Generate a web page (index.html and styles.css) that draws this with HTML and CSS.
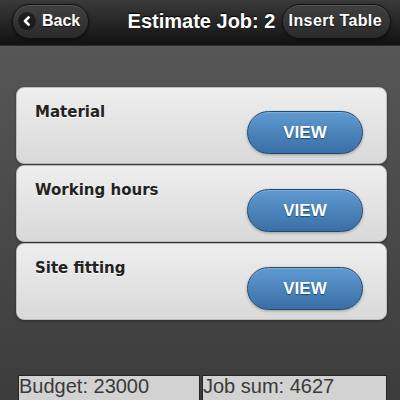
FILE: index.html
```html
<!DOCTYPE html>
<html>
<head>
<meta charset="utf-8">
<link rel="stylesheet" href="styles.css">
</head>
<body>
<div class="page">
  <header class="bar">
    <a class="hbtn back">
      <svg class="icon" width="18" height="18" viewBox="0 0 18 18"><circle cx="9" cy="9" r="9" fill="rgba(0,0,0,0.45)"/><polyline points="10.6,5.4 7,9 10.6,12.6" fill="none" stroke="#fff" stroke-width="2.7" stroke-linecap="round" stroke-linejoin="round"/></svg>
      <span>Back</span>
    </a>
    <h1 class="title">Estimate Job: 2</h1>
    <a class="hbtn insert"><span>Insert Table</span></a>
  </header>
  <main class="content">
    <div class="card"><span class="label">Material</span><a class="view">VIEW</a></div>
    <div class="card"><span class="label">Working hours</span><a class="view">VIEW</a></div>
    <div class="card"><span class="label">Site fitting</span><a class="view">VIEW</a></div>
  </main>
  <footer class="totals">
    <div class="box budget">Budget: 23000</div>
    <div class="box sum">Job sum: 4627</div>
  </footer>
</div>
</body>
</html>
```
FILE: styles.css
```css
html, body {
  margin: 0;
  padding: 0;
}
body {
  width: 400px;
  height: 400px;
  overflow: hidden;
  font-family: "Liberation Sans", Arial, sans-serif;
}
.page {
  height: 400px;
  background: linear-gradient(#5a5a5a, #3c3c3c);
  display: flex;
  flex-direction: column;
}
.bar {
  height: 46px;
  flex: none;
  box-sizing: border-box;
  display: grid;
  grid-template-columns: 1fr auto 1fr;
  align-items: center;
  padding: 0 9px 0 12px;
  background: linear-gradient(#3a3a3a, #111);
  border-bottom: 1px solid #2a2a2a;
}
.hbtn {
  height: 35px;
  box-sizing: border-box;
  display: flex;
  align-items: center;
  border: 1px solid #111;
  border-radius: 18px;
  background: linear-gradient(#404040, #2a2a2a);
  box-shadow: 0 1px 3px rgba(0,0,0,0.5), inset 0 1px 0 rgba(255,255,255,0.12);
  color: #fff;
  font-weight: bold;
  font-size: 16px;
  text-shadow: 0 1px 1px #111;
  margin-top: -3px;
}
.back {
  justify-self: start;
  padding: 0 8px 0 5px;
  gap: 6px;
}
.icon {
  display: block;
}
.insert {
  justify-self: end;
  padding: 0 8px 0 6px;
  letter-spacing: 0.4px;
}
.title {
  margin: 0;
  font-size: 20px;
  font-weight: bold;
  color: #fff;
  text-shadow: 0 -1px 1px #000;
  margin-top: -3px;
}
.content {
  flex: none;
  padding: 41px 13px 0 16px;
  display: flex;
  flex-direction: column;
  gap: 1px;
}
.card {
  height: 77px;
  box-sizing: border-box;
  display: flex;
  justify-content: space-between;
  align-items: flex-start;
  padding: 15px 23px 0 18px;
  border: 1px solid #bdbdbd;
  border-radius: 8px;
  background: linear-gradient(#eeeeee, #d9d9d9);
  box-shadow: 0 1px 3px rgba(0,0,0,0.35);
}
.label {
  font-family: "DejaVu Sans", Verdana, sans-serif;
  font-weight: bold;
  font-size: 15px;
  line-height: 18px;
  color: #222;
  text-shadow: 0 1px 0 #fff;
}
.view {
  margin-top: 8px;
  width: 116px;
  height: 43px;
  box-sizing: border-box;
  display: flex;
  align-items: center;
  justify-content: center;
  border: 1px solid #1f4a73;
  border-radius: 22px;
  background: linear-gradient(#5f9ad0, #3a6fa6);
  box-shadow: 0 1px 3px rgba(0,0,0,0.3), inset 0 1px 0 rgba(255,255,255,0.2);
  color: #fff;
  font-weight: bold;
  font-size: 17px;
  text-shadow: 0 1px 1px #194b7e;
}
.totals {
  flex: none;
  margin-top: 55px;
  display: flex;
  gap: 2px;
  padding-left: 18px;
}
.box {
  height: 30px;
  box-sizing: border-box;
  border: 1px solid #262626;
  background: #d2d2d2;
  color: #3a3a3a;
  font-size: 20px;
  line-height: 20px;
}
.budget {
  width: 182px;
}
.sum {
  width: 185px;
}
```
